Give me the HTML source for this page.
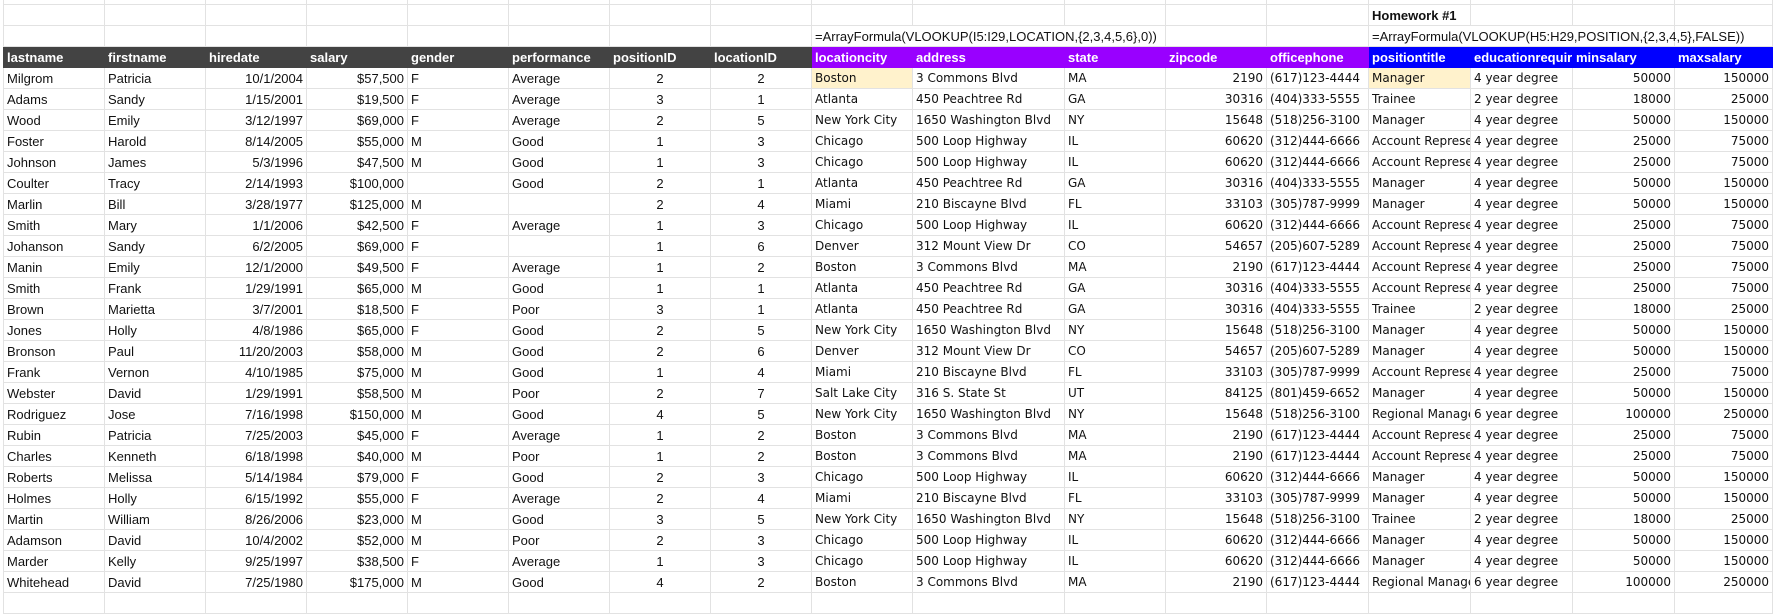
<!DOCTYPE html>
<html><head><meta charset="utf-8"><style>
body{margin:0;width:1776px;height:599px;overflow:hidden;background:#fff;position:relative}
table{position:absolute;left:3px;top:-17px;width:1769px;border-collapse:collapse;table-layout:fixed;font-family:"Liberation Sans",sans-serif;font-size:13px;color:#111}
td{height:21px;padding:0 3px;border:1px solid #e2e2e2;white-space:nowrap;overflow:hidden;box-sizing:border-box;line-height:19px}
tr.h td{background:#434343;color:#fff;font-weight:bold;border-color:#434343}
tr.h td.p{background:#9900ff;border-color:#9900ff}
tr.h td.b{background:#0000ff;border-color:#0000ff}
.r{text-align:right}.c{text-align:center}
tr.d td:nth-child(n+9){font-family:"DejaVu Sans",sans-serif;font-size:12px}
.y{background:#fff2cc}
.ov{overflow:visible}
</style></head><body>
<table>
<colgroup><col style="width:101px"><col style="width:101px"><col style="width:101px"><col style="width:101px"><col style="width:101px"><col style="width:101px"><col style="width:101px"><col style="width:101px"><col style="width:101px"><col style="width:152px"><col style="width:101px"><col style="width:101px"><col style="width:102px"><col style="width:102px"><col style="width:102px"><col style="width:102px"><col style="width:98px"></colgroup>
<tr><td></td><td></td><td></td><td></td><td></td><td></td><td></td><td></td><td></td><td></td><td></td><td></td><td></td><td></td><td></td><td></td><td></td></tr>
<tr><td></td><td></td><td></td><td></td><td></td><td></td><td></td><td></td><td></td><td></td><td></td><td></td><td></td><td style="font-weight:bold">Homework #1</td><td></td><td></td><td></td></tr>
<tr><td></td><td></td><td></td><td></td><td></td><td></td><td></td><td></td><td class="ov" style="border-right:none">=ArrayFormula(VLOOKUP(I5:I29,LOCATION,{2,3,4,5,6},0))</td><td style="border-left:none;border-right:none"></td><td style="border-left:none"></td><td></td><td></td><td class="ov" style="border-right:none">=ArrayFormula(VLOOKUP(H5:H29,POSITION,{2,3,4,5},FALSE))</td><td style="border-left:none;border-right:none"></td><td style="border-left:none"></td><td></td></tr>
<tr class="h"><td>lastname</td><td>firstname</td><td>hiredate</td><td>salary</td><td>gender</td><td>performance</td><td>positionID</td><td>locationID</td><td class="p">locationcity</td><td class="p">address</td><td class="p">state</td><td class="p">zipcode</td><td class="p">officephone</td><td class="b">positiontitle</td><td class="b">educationrequirement</td><td class="b">minsalary</td><td class="b">maxsalary</td></tr>
<tr class="d"><td>Milgrom</td><td>Patricia</td><td class="r">10/1/2004</td><td class="r">$57,500</td><td>F</td><td>Average</td><td class="c">2</td><td class="c">2</td><td class="y">Boston</td><td>3 Commons Blvd</td><td>MA</td><td class="r">2190</td><td>(617)123-4444</td><td class="y">Manager</td><td>4 year degree</td><td class="r">50000</td><td class="r">150000</td></tr>
<tr class="d"><td>Adams</td><td>Sandy</td><td class="r">1/15/2001</td><td class="r">$19,500</td><td>F</td><td>Average</td><td class="c">3</td><td class="c">1</td><td>Atlanta</td><td>450 Peachtree Rd</td><td>GA</td><td class="r">30316</td><td>(404)333-5555</td><td>Trainee</td><td>2 year degree</td><td class="r">18000</td><td class="r">25000</td></tr>
<tr class="d"><td>Wood</td><td>Emily</td><td class="r">3/12/1997</td><td class="r">$69,000</td><td>F</td><td>Average</td><td class="c">2</td><td class="c">5</td><td>New York City</td><td>1650 Washington Blvd</td><td>NY</td><td class="r">15648</td><td>(518)256-3100</td><td>Manager</td><td>4 year degree</td><td class="r">50000</td><td class="r">150000</td></tr>
<tr class="d"><td>Foster</td><td>Harold</td><td class="r">8/14/2005</td><td class="r">$55,000</td><td>M</td><td>Good</td><td class="c">1</td><td class="c">3</td><td>Chicago</td><td>500 Loop Highway</td><td>IL</td><td class="r">60620</td><td>(312)444-6666</td><td>Account Representative</td><td>4 year degree</td><td class="r">25000</td><td class="r">75000</td></tr>
<tr class="d"><td>Johnson</td><td>James</td><td class="r">5/3/1996</td><td class="r">$47,500</td><td>M</td><td>Good</td><td class="c">1</td><td class="c">3</td><td>Chicago</td><td>500 Loop Highway</td><td>IL</td><td class="r">60620</td><td>(312)444-6666</td><td>Account Representative</td><td>4 year degree</td><td class="r">25000</td><td class="r">75000</td></tr>
<tr class="d"><td>Coulter</td><td>Tracy</td><td class="r">2/14/1993</td><td class="r">$100,000</td><td></td><td>Good</td><td class="c">2</td><td class="c">1</td><td>Atlanta</td><td>450 Peachtree Rd</td><td>GA</td><td class="r">30316</td><td>(404)333-5555</td><td>Manager</td><td>4 year degree</td><td class="r">50000</td><td class="r">150000</td></tr>
<tr class="d"><td>Marlin</td><td>Bill</td><td class="r">3/28/1977</td><td class="r">$125,000</td><td>M</td><td></td><td class="c">2</td><td class="c">4</td><td>Miami</td><td>210 Biscayne Blvd</td><td>FL</td><td class="r">33103</td><td>(305)787-9999</td><td>Manager</td><td>4 year degree</td><td class="r">50000</td><td class="r">150000</td></tr>
<tr class="d"><td>Smith</td><td>Mary</td><td class="r">1/1/2006</td><td class="r">$42,500</td><td>F</td><td>Average</td><td class="c">1</td><td class="c">3</td><td>Chicago</td><td>500 Loop Highway</td><td>IL</td><td class="r">60620</td><td>(312)444-6666</td><td>Account Representative</td><td>4 year degree</td><td class="r">25000</td><td class="r">75000</td></tr>
<tr class="d"><td>Johanson</td><td>Sandy</td><td class="r">6/2/2005</td><td class="r">$69,000</td><td>F</td><td></td><td class="c">1</td><td class="c">6</td><td>Denver</td><td>312 Mount View Dr</td><td>CO</td><td class="r">54657</td><td>(205)607-5289</td><td>Account Representative</td><td>4 year degree</td><td class="r">25000</td><td class="r">75000</td></tr>
<tr class="d"><td>Manin</td><td>Emily</td><td class="r">12/1/2000</td><td class="r">$49,500</td><td>F</td><td>Average</td><td class="c">1</td><td class="c">2</td><td>Boston</td><td>3 Commons Blvd</td><td>MA</td><td class="r">2190</td><td>(617)123-4444</td><td>Account Representative</td><td>4 year degree</td><td class="r">25000</td><td class="r">75000</td></tr>
<tr class="d"><td>Smith</td><td>Frank</td><td class="r">1/29/1991</td><td class="r">$65,000</td><td>M</td><td>Good</td><td class="c">1</td><td class="c">1</td><td>Atlanta</td><td>450 Peachtree Rd</td><td>GA</td><td class="r">30316</td><td>(404)333-5555</td><td>Account Representative</td><td>4 year degree</td><td class="r">25000</td><td class="r">75000</td></tr>
<tr class="d"><td>Brown</td><td>Marietta</td><td class="r">3/7/2001</td><td class="r">$18,500</td><td>F</td><td>Poor</td><td class="c">3</td><td class="c">1</td><td>Atlanta</td><td>450 Peachtree Rd</td><td>GA</td><td class="r">30316</td><td>(404)333-5555</td><td>Trainee</td><td>2 year degree</td><td class="r">18000</td><td class="r">25000</td></tr>
<tr class="d"><td>Jones</td><td>Holly</td><td class="r">4/8/1986</td><td class="r">$65,000</td><td>F</td><td>Good</td><td class="c">2</td><td class="c">5</td><td>New York City</td><td>1650 Washington Blvd</td><td>NY</td><td class="r">15648</td><td>(518)256-3100</td><td>Manager</td><td>4 year degree</td><td class="r">50000</td><td class="r">150000</td></tr>
<tr class="d"><td>Bronson</td><td>Paul</td><td class="r">11/20/2003</td><td class="r">$58,000</td><td>M</td><td>Good</td><td class="c">2</td><td class="c">6</td><td>Denver</td><td>312 Mount View Dr</td><td>CO</td><td class="r">54657</td><td>(205)607-5289</td><td>Manager</td><td>4 year degree</td><td class="r">50000</td><td class="r">150000</td></tr>
<tr class="d"><td>Frank</td><td>Vernon</td><td class="r">4/10/1985</td><td class="r">$75,000</td><td>M</td><td>Good</td><td class="c">1</td><td class="c">4</td><td>Miami</td><td>210 Biscayne Blvd</td><td>FL</td><td class="r">33103</td><td>(305)787-9999</td><td>Account Representative</td><td>4 year degree</td><td class="r">25000</td><td class="r">75000</td></tr>
<tr class="d"><td>Webster</td><td>David</td><td class="r">1/29/1991</td><td class="r">$58,500</td><td>M</td><td>Poor</td><td class="c">2</td><td class="c">7</td><td>Salt Lake City</td><td>316 S. State St</td><td>UT</td><td class="r">84125</td><td>(801)459-6652</td><td>Manager</td><td>4 year degree</td><td class="r">50000</td><td class="r">150000</td></tr>
<tr class="d"><td>Rodriguez</td><td>Jose</td><td class="r">7/16/1998</td><td class="r">$150,000</td><td>M</td><td>Good</td><td class="c">4</td><td class="c">5</td><td>New York City</td><td>1650 Washington Blvd</td><td>NY</td><td class="r">15648</td><td>(518)256-3100</td><td>Regional Manager</td><td>6 year degree</td><td class="r">100000</td><td class="r">250000</td></tr>
<tr class="d"><td>Rubin</td><td>Patricia</td><td class="r">7/25/2003</td><td class="r">$45,000</td><td>F</td><td>Average</td><td class="c">1</td><td class="c">2</td><td>Boston</td><td>3 Commons Blvd</td><td>MA</td><td class="r">2190</td><td>(617)123-4444</td><td>Account Representative</td><td>4 year degree</td><td class="r">25000</td><td class="r">75000</td></tr>
<tr class="d"><td>Charles</td><td>Kenneth</td><td class="r">6/18/1998</td><td class="r">$40,000</td><td>M</td><td>Poor</td><td class="c">1</td><td class="c">2</td><td>Boston</td><td>3 Commons Blvd</td><td>MA</td><td class="r">2190</td><td>(617)123-4444</td><td>Account Representative</td><td>4 year degree</td><td class="r">25000</td><td class="r">75000</td></tr>
<tr class="d"><td>Roberts</td><td>Melissa</td><td class="r">5/14/1984</td><td class="r">$79,000</td><td>F</td><td>Good</td><td class="c">2</td><td class="c">3</td><td>Chicago</td><td>500 Loop Highway</td><td>IL</td><td class="r">60620</td><td>(312)444-6666</td><td>Manager</td><td>4 year degree</td><td class="r">50000</td><td class="r">150000</td></tr>
<tr class="d"><td>Holmes</td><td>Holly</td><td class="r">6/15/1992</td><td class="r">$55,000</td><td>F</td><td>Average</td><td class="c">2</td><td class="c">4</td><td>Miami</td><td>210 Biscayne Blvd</td><td>FL</td><td class="r">33103</td><td>(305)787-9999</td><td>Manager</td><td>4 year degree</td><td class="r">50000</td><td class="r">150000</td></tr>
<tr class="d"><td>Martin</td><td>William</td><td class="r">8/26/2006</td><td class="r">$23,000</td><td>M</td><td>Good</td><td class="c">3</td><td class="c">5</td><td>New York City</td><td>1650 Washington Blvd</td><td>NY</td><td class="r">15648</td><td>(518)256-3100</td><td>Trainee</td><td>2 year degree</td><td class="r">18000</td><td class="r">25000</td></tr>
<tr class="d"><td>Adamson</td><td>David</td><td class="r">10/4/2002</td><td class="r">$52,000</td><td>M</td><td>Poor</td><td class="c">2</td><td class="c">3</td><td>Chicago</td><td>500 Loop Highway</td><td>IL</td><td class="r">60620</td><td>(312)444-6666</td><td>Manager</td><td>4 year degree</td><td class="r">50000</td><td class="r">150000</td></tr>
<tr class="d"><td>Marder</td><td>Kelly</td><td class="r">9/25/1997</td><td class="r">$38,500</td><td>F</td><td>Average</td><td class="c">1</td><td class="c">3</td><td>Chicago</td><td>500 Loop Highway</td><td>IL</td><td class="r">60620</td><td>(312)444-6666</td><td>Manager</td><td>4 year degree</td><td class="r">50000</td><td class="r">150000</td></tr>
<tr class="d"><td>Whitehead</td><td>David</td><td class="r">7/25/1980</td><td class="r">$175,000</td><td>M</td><td>Good</td><td class="c">4</td><td class="c">2</td><td>Boston</td><td>3 Commons Blvd</td><td>MA</td><td class="r">2190</td><td>(617)123-4444</td><td>Regional Manager</td><td>6 year degree</td><td class="r">100000</td><td class="r">250000</td></tr>
<tr><td></td><td></td><td></td><td></td><td></td><td></td><td></td><td></td><td></td><td></td><td></td><td></td><td></td><td></td><td></td><td></td><td></td></tr>
</table>
</body></html>
